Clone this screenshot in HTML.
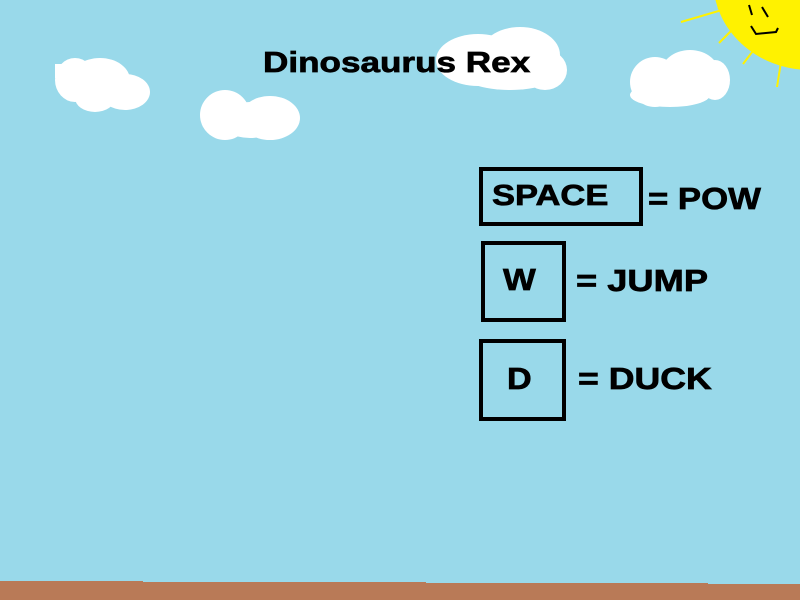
<!DOCTYPE html>
<html><head><style>
body{margin:0;width:800px;height:600px;overflow:hidden;background:#99d9ea;position:relative;font-family:"Liberation Sans",Arial,sans-serif;font-weight:bold;color:#000}
.t{position:absolute;white-space:nowrap;line-height:1;transform-origin:left top;-webkit-text-stroke:0.7px #000}
.box{position:absolute;border:4px solid #000;box-sizing:border-box}
</style></head><body>
<svg width="800" height="600" style="position:absolute;left:0;top:0">
<g fill="#fff">
<ellipse cx="75" cy="80" rx="20" ry="22"/><ellipse cx="100" cy="80" rx="30" ry="22"/><ellipse cx="125" cy="92" rx="25" ry="18"/><ellipse cx="95" cy="98" rx="20" ry="14"/><rect x="55" y="64" width="14" height="14"/>
<ellipse cx="225" cy="115" rx="25" ry="25"/><ellipse cx="270" cy="118" rx="30" ry="22"/><ellipse cx="250" cy="120" rx="30" ry="18"/>
<ellipse cx="478" cy="60" rx="42" ry="26"/><ellipse cx="520" cy="55" rx="40" ry="28"/><ellipse cx="545" cy="70" rx="22" ry="20"/><ellipse cx="510" cy="72" rx="50" ry="18"/>
<ellipse cx="655" cy="82" rx="25" ry="25"/><ellipse cx="690" cy="75" rx="30" ry="25"/><ellipse cx="715" cy="80" rx="15" ry="20"/><ellipse cx="670" cy="95" rx="40" ry="12"/>
</g>
<ellipse cx="810" cy="-20" rx="97" ry="90" fill="#fff200"/>
<g stroke="#fff200" stroke-width="2" fill="none">
<path d="M681 22 L722 10 L718 8"/><path d="M719 43 L735 27"/><path d="M743 64 L756 47"/><path d="M777 87 L781 62"/>
</g>
<g stroke="#000" stroke-width="2" fill="none">
<path d="M749 5 L752 15"/><path d="M762 7 L768 17"/><path d="M751 26 L756 34 L776 32 L778 28"/>
</g>
<polygon points="0,581 143,581 143,582 426,582 426,583 708,583 708,584 800,584 800,600 0,600" fill="#b97a57"/>
</svg>
<div class="t" style="left:263px;top:49px;font-size:29px;transform:scaleX(1.21)">Dinosaurus Rex</div>
<div class="box" style="left:479px;top:167px;width:164px;height:59px"></div>
<div class="t" style="left:492px;top:182px;font-size:29px;transform:scaleX(1.19)">SPACE</div>
<div class="t" style="left:648px;top:183px;font-size:31px;transform:scaleX(1.12)">= POW</div>
<div class="box" style="left:481px;top:241px;width:85px;height:81px"></div>
<div class="t" style="left:503px;top:264px;font-size:31px;transform:scaleX(1.12)">W</div>
<div class="t" style="left:576px;top:265px;font-size:31px;transform:scaleX(1.17)">= JUMP</div>
<div class="box" style="left:479px;top:339px;width:87px;height:82px"></div>
<div class="t" style="left:507px;top:363px;font-size:31px;transform:scaleX(1.1)">D</div>
<div class="t" style="left:578px;top:363px;font-size:31px;transform:scaleX(1.15)">= DUCK</div>
</body></html>
